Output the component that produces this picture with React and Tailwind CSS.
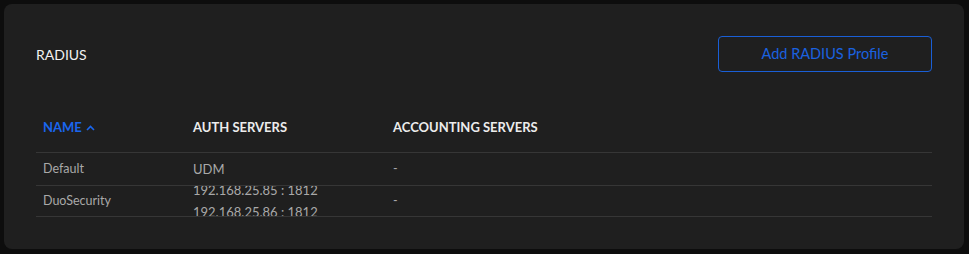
const rows = [
  { name: 'Default', auth: ['UDM'], acct: '-' },
  { name: 'DuoSecurity', auth: ['192.168.25.85 : 1812', '192.168.25.86 : 1812'], acct: '-' },
];

const App = () => {
  return (
    <div className="min-h-screen bg-[#0d0d0d] pt-1 pb-[5px] pl-1 pr-[5px]" style={{ fontFamily: 'Lato, "Noto Sans", sans-serif' }}>
      <div className="rounded-lg bg-[#1f1f1f] px-8 pt-8 pb-8">
        <div className="flex items-center justify-between h-9">
          <h1 className="text-[14px] text-[#f2f2f2]">RADIUS</h1>
          <button className="w-[214px] h-9 rounded border border-[#1a5fd6] text-[14.5px] text-[#1a62e0]">
            Add RADIUS Profile
          </button>
        </div>

        <div className="mt-8">
          <div className="flex items-center h-[49px] border-b border-[#363636] text-[13px] font-bold">
            <div className="w-[150px] pl-[7px] flex items-center gap-1 text-[#1a66ee]">
              NAME
              <svg width="9" height="6" viewBox="0 0 9 6" fill="none">
                <path d="M1 5L4.5 1.5L8 5" stroke="#1a66ee" strokeWidth="1.6" />
              </svg>
            </div>
            <div className="w-[200px] pl-[7px] text-[#ececec]">AUTH SERVERS</div>
            <div className="pl-[7px] text-[#ececec]">ACCOUNTING SERVERS</div>
          </div>

          {rows.map((row, i) => (
            <div
              key={row.name}
              className={`flex items-center border-b border-[#363636] text-[#a9a9a9] overflow-hidden ${i === 0 ? 'h-[33px]' : 'h-[31px]'}`}
            >
              <div className="w-[150px] pl-[7px] text-[12.5px] pt-px">{row.name}</div>
              <div className="w-[200px] pl-[7px] flex flex-col text-[13px]">
                {row.auth.map((a) => (
                  <div key={a} className="leading-[22px]">{a}</div>
                ))}
              </div>
              <div className="pl-[7px] text-[12.5px]">{row.acct}</div>
            </div>
          ))}
        </div>
      </div>
    </div>
  );
};

export default App;
